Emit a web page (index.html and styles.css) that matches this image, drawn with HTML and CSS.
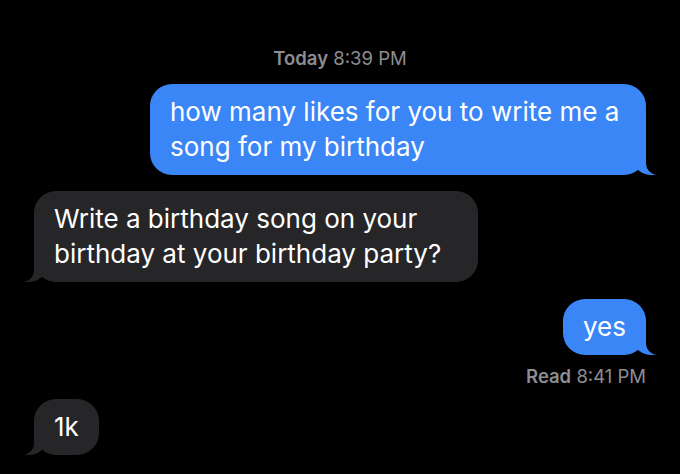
FILE: index.html
```html
<!DOCTYPE html>
<html>
<head>
<meta charset="utf-8">
<title>Messages</title>
<link rel="stylesheet" href="styles.css">
</head>
<body>

<div class="thread">
  <div class="stamp"><b>Today</b> 8:39 PM</div>

  <div class="row out">
    <div class="bubble blue">how many likes for you to write me a song for my birthday</div>
  </div>

  <div class="row in">
    <div class="bubble gray">Write a birthday song on your birthday at your birthday party?</div>
  </div>

  <div class="row out gap_big">
    <div class="bubble blue">yes</div>
  </div>
  <div class="status"><b>Read</b> 8:41 PM</div>

  <div class="row in">
    <div class="bubble gray">1k</div>
  </div>
</div>

</body>
</html>
```

FILE: styles.css
```css
* {
    box-sizing: border-box;
}
body {
    margin: 0;
    background: #000;
    font-family: Inter, "Liberation Sans", sans-serif;
}
.thread {
    display: flex;
    flex-direction: column;
    padding: 45px 34px 0 34px;
}
.stamp {
    text-align: center;
    color: #8d8d92;
    font-size: 18.5px;
    line-height: 26px;
    margin-bottom: 13px;
}
.stamp b, .status b {
    font-weight: 600;
}
.row {
    display: flex;
    margin-bottom: 16px;
}
.row.out {
    justify-content: flex-end;
}
.row.in {
    justify-content: flex-start;
}
.gap_big {
    margin-top: 1px;
    margin-bottom: 8px;
}
.bubble {
    position: relative;
    font-size: 26px;
    line-height: 35px;
    color: #fff;
    padding: 10px 20px 11px 20px;
    border-radius: 22px;
    max-width: 496px;
}
.blue {
    background: #3b86f7;
}
.gray {
    background: #262628;
    max-width: 444px;
}
/* little tails at the bottom corner */
.bubble::before, .bubble::after {
    content: "";
    position: absolute;
    bottom: 0;
    height: 24px;
}
.out .bubble::before {
    right: -10px;
    width: 22px;
    background: #3b86f7;
    border-bottom-left-radius: 18px 14px;
}
.out .bubble::after {
    right: -26px;
    width: 26px;
    background: #000;
    border-bottom-left-radius: 12px;
}
.in .bubble::before {
    left: -10px;
    width: 22px;
    background: #262628;
    border-bottom-right-radius: 18px 14px;
}
.in .bubble::after {
    left: -26px;
    width: 26px;
    background: #000;
    border-bottom-right-radius: 12px;
}
.status {
    text-align: right;
    color: #8d8d92;
    font-size: 18.5px;
    line-height: 26px;
    margin-bottom: 10px;
}
```
